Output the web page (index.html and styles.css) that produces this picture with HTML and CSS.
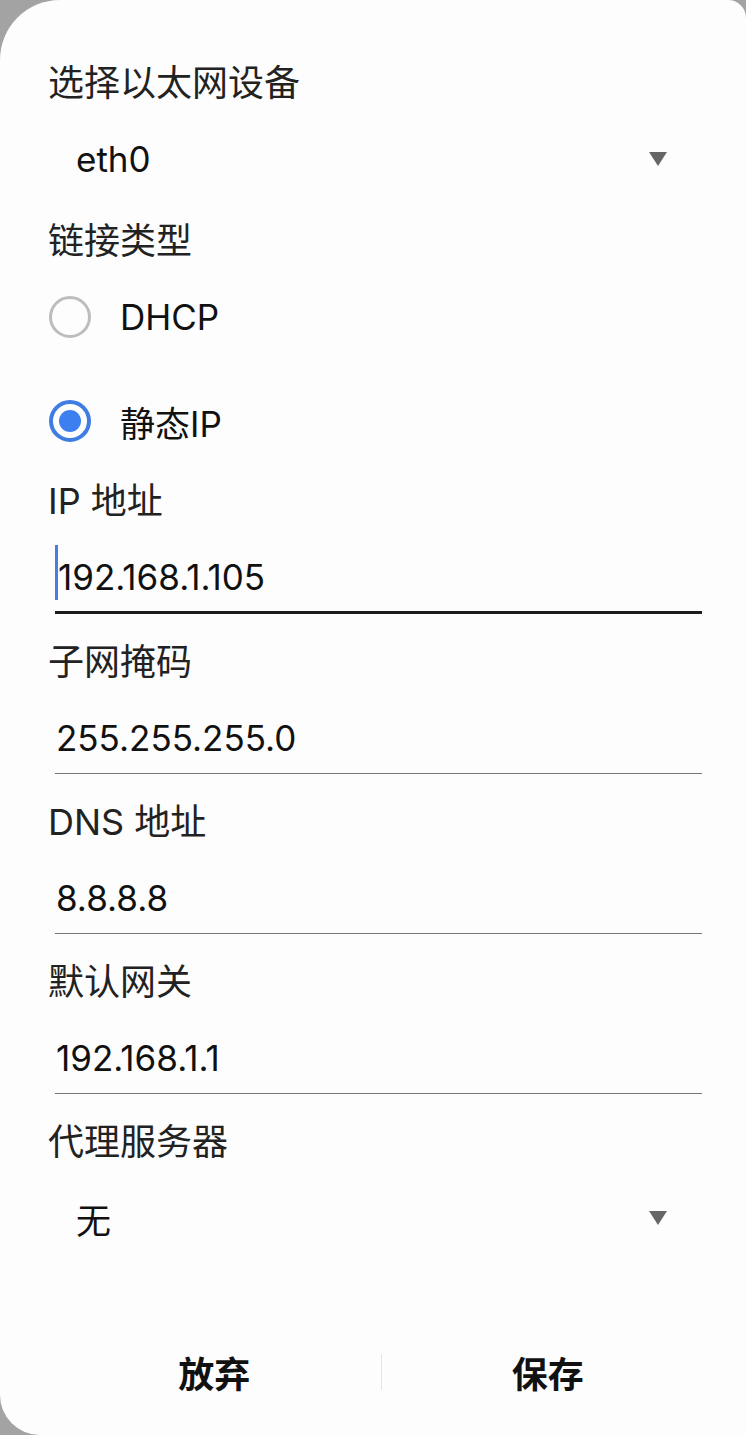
FILE: index.html
```html
<!DOCTYPE html>
<html lang="zh-CN">
<head>
  <meta charset="UTF-8">
  <title>以太网设置</title>
  <link rel="stylesheet" href="styles.css">
</head>
<body>
  <div class="dialog">
    <div class="label first">选择以太网设备</div>
    <div class="select">
      <span>eth0</span>
      <span class="arrow"></span>
    </div>

    <div class="label after-select">链接类型</div>
    <div class="radio-row top">
      <span class="radio"></span>
      <span>DHCP</span>
    </div>
    <div class="radio-row">
      <span class="radio checked"></span>
      <span>静态IP</span>
    </div>

    <div class="field top">
      <div class="label">IP 地址</div>
      <div class="input focused"><span class="caret"></span>192.168.1.105</div>
    </div>
    <div class="field">
      <div class="label">子网掩码</div>
      <div class="input">255.255.255.0</div>
    </div>
    <div class="field">
      <div class="label">DNS 地址</div>
      <div class="input">8.8.8.8</div>
    </div>
    <div class="field">
      <div class="label">默认网关</div>
      <div class="input">192.168.1.1</div>
    </div>

    <div class="label proxy">代理服务器</div>
    <div class="select">
      <span>无</span>
      <span class="arrow"></span>
    </div>

    <div class="footer">
      <button class="action">放弃</button>
      <span class="divider"></span>
      <button class="action">保存</button>
    </div>
  </div>
</body>
</html>
```

FILE: styles.css
```css
* {
  box-sizing: border-box;
}

body {
  margin: 0;
  background: #a3a3a3;
  font-family: Inter, "Noto Sans CJK SC", sans-serif;
  color: #1a1a1a;
}

.dialog {
  min-height: 1435px;
  display: flex;
  flex-direction: column;
  padding: 0 44px 0 48px;
  background: #fdfdfd;
  border-radius: 60px 18px 0 40px;
}

.label {
  font-size: 36px;
  line-height: 40px;
  color: #222;
}

.label.first {
  margin-top: 63px;
}

.label.after-select {
  margin-top: 12px;
}

.select {
  height: 100px;
  margin-top: 6px;
  display: flex;
  align-items: center;
  justify-content: space-between;
  padding: 0 35px 0 28px;
  font-size: 35px;
  color: #111;
}

.arrow {
  width: 0;
  height: 0;
  border-left: 9px solid transparent;
  border-right: 9px solid transparent;
  border-top: 14px solid #666;
}

.radio-row {
  height: 104px;
  display: flex;
  align-items: center;
  gap: 29px;
  font-size: 35px;
  color: #111;
}

.radio-row.top {
  margin-top: 4px;
}

.radio {
  width: 42px;
  height: 42px;
  margin-left: 1px;
  border: 3px solid #bdbdbd;
  border-radius: 50%;
  display: flex;
  align-items: center;
  justify-content: center;
}

.radio.checked {
  border: 4px solid #3f7de3;
}

.radio.checked::after {
  content: "";
  width: 22px;
  height: 22px;
  border-radius: 50%;
  background: #3b7ff0;
}

.field {
  margin-top: 28px;
}

.field.top {
  margin-top: 8px;
}

.input {
  position: relative;
  margin-left: 7px;
  padding: 36px 0 15px 1px;
  font-size: 35px;
  line-height: 40px;
  color: #111;
  border-bottom: 1px solid #777;
}

.input.focused {
  padding-bottom: 14px;
  padding-left: 3px;
  border-bottom: 3px solid #1c1c1c;
}

.caret {
  position: absolute;
  left: 0;
  top: 24px;
  width: 3px;
  height: 55px;
  background: #4a7ddf;
}

.label.proxy {
  margin-top: 28px;
}

.footer {
  margin-top: auto;
  margin-right: -12px;
  margin-bottom: 23px;
  height: 80px;
  display: flex;
  align-items: center;
}

.action {
  flex: 1;
  border: none;
  background: none;
  font-family: Inter, "Noto Sans CJK SC", sans-serif;
  font-size: 36px;
  font-weight: 700;
  color: #111;
  padding: 0;
}

.divider {
  width: 1px;
  height: 36px;
  background: #e6e6e6;
}
```
